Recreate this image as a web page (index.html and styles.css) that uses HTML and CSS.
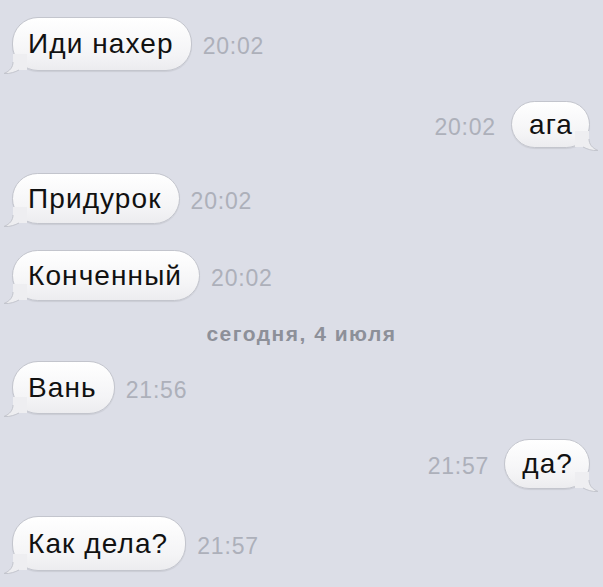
FILE: index.html
```html
<!DOCTYPE html>
<html lang="ru">
<head>
<meta charset="utf-8">
<link rel="stylesheet" href="styles.css">
</head>
<body>
<div class="chat">
  <div class="row in r1">
    <div class="bubble">Иди нахер<svg class="tail" viewBox="0 0 24 20" width="24" height="20"><path class="tf" d="M10,0 L10,8 C10,13 7,17 1,19.5 C7,20 12,18 16,16 L24,16 L24,0 Z"/><path class="ts" d="M10,8 C10,13 7,17 1,19.5 C7,20 12,18 16,16"/></svg></div>
    <span class="time">20:02</span>
  </div>
  <div class="row out r2">
    <span class="time">20:02</span>
    <div class="bubble">ага<svg class="tail" viewBox="0 0 24 20" width="24" height="20"><path class="tf" d="M10,0 L10,8 C10,13 7,17 1,19.5 C7,20 12,18 16,16 L24,16 L24,0 Z"/><path class="ts" d="M10,8 C10,13 7,17 1,19.5 C7,20 12,18 16,16"/></svg></div>
  </div>
  <div class="row in r3">
    <div class="bubble">Придурок<svg class="tail" viewBox="0 0 24 20" width="24" height="20"><path class="tf" d="M10,0 L10,8 C10,13 7,17 1,19.5 C7,20 12,18 16,16 L24,16 L24,0 Z"/><path class="ts" d="M10,8 C10,13 7,17 1,19.5 C7,20 12,18 16,16"/></svg></div>
    <span class="time">20:02</span>
  </div>
  <div class="row in r4">
    <div class="bubble">Конченный<svg class="tail" viewBox="0 0 24 20" width="24" height="20"><path class="tf" d="M10,0 L10,8 C10,13 7,17 1,19.5 C7,20 12,18 16,16 L24,16 L24,0 Z"/><path class="ts" d="M10,8 C10,13 7,17 1,19.5 C7,20 12,18 16,16"/></svg></div>
    <span class="time">20:02</span>
  </div>
  <div class="date">сегодня, 4 июля</div>
  <div class="row in r5">
    <div class="bubble">Вань<svg class="tail" viewBox="0 0 24 20" width="24" height="20"><path class="tf" d="M10,0 L10,8 C10,13 7,17 1,19.5 C7,20 12,18 16,16 L24,16 L24,0 Z"/><path class="ts" d="M10,8 C10,13 7,17 1,19.5 C7,20 12,18 16,16"/></svg></div>
    <span class="time">21:56</span>
  </div>
  <div class="row out r6">
    <span class="time">21:57</span>
    <div class="bubble">да?<svg class="tail" viewBox="0 0 24 20" width="24" height="20"><path class="tf" d="M10,0 L10,8 C10,13 7,17 1,19.5 C7,20 12,18 16,16 L24,16 L24,0 Z"/><path class="ts" d="M10,8 C10,13 7,17 1,19.5 C7,20 12,18 16,16"/></svg></div>
  </div>
  <div class="row in r7">
    <div class="bubble">Как дела?<svg class="tail" viewBox="0 0 24 20" width="24" height="20"><path class="tf" d="M10,0 L10,8 C10,13 7,17 1,19.5 C7,20 12,18 16,16 L24,16 L24,0 Z"/><path class="ts" d="M10,8 C10,13 7,17 1,19.5 C7,20 12,18 16,16"/></svg></div>
    <span class="time">21:57</span>
  </div>
</div>
</body>
</html>
```
FILE: styles.css
```css
html, body {
  margin: 0;
  padding: 0;
}
body {
  width: 603px;
  height: 587px;
  overflow: hidden;
  background: #dcdee7;
  font-family: "Liberation Sans", Arial, sans-serif;
}
.chat {
  display: flex;
  flex-direction: column;
  padding: 17px 0 0;
}
.row {
  display: flex;
  align-items: center;
  height: 54px;
}
.row.in {
  justify-content: flex-start;
  padding-left: 12px;
  gap: 11px;
}
.row.out {
  justify-content: flex-end;
  padding-right: 13px;
  gap: 15px;
}
.r2 { margin-top: 30px; height: 47px; }
.r3 { margin-top: 25px; height: 51px; }
.r4 { margin-top: 26px; height: 51px; }
.r5 { margin-top: 14px; height: 53px; }
.r6 { margin-top: 25px; height: 50px; }
.r7 { margin-top: 27px; height: 55px; }

.bubble {
  position: relative;
  box-sizing: border-box;
  height: 100%;
  display: flex;
  align-items: center;
  padding: 0 17px 0 15px;
  font-size: 28px;
  letter-spacing: 1.1px;
  color: #111;
  background: linear-gradient(#ffffff, #f4f4f6 70%, #ececef);
  border: 1px solid #c3c5cd;
  border-radius: 26px;
  box-shadow: 0 1px 1px rgba(0, 0, 0, 0.08);
}
.out .bubble {
  padding: 0 16px 0 17px;
}
.tail {
  position: absolute;
  left: -10px;
  bottom: -4px;
  overflow: visible;
}
.out .tail {
  left: auto;
  right: -10px;
  transform: scaleX(-1);
}
.tf {
  fill: #eeeef1;
}
.ts {
  fill: none;
  stroke: #c3c5cd;
  stroke-width: 1;
}
.time {
  font-size: 23px;
  letter-spacing: 0.8px;
  color: #adb0ba;
  padding-top: 5px;
}
.date {
  height: 27px;
  margin-top: 19px;
  text-align: center;
  font-size: 21px;
  letter-spacing: 1.5px;
  font-weight: bold;
  color: #8d9099;
  line-height: 27px;
}
```
